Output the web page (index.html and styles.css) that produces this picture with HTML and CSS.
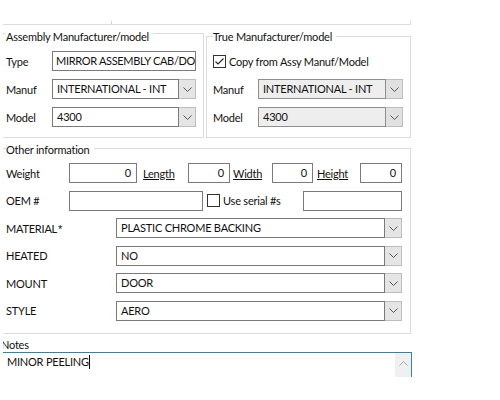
FILE: index.html
```html
<!DOCTYPE html>
<html lang="en">
<head>
  <meta charset="UTF-8">
  <meta name="viewport" content="width=device-width, initial-scale=1.0">
  <title>Assembly details</title>
  <link rel="stylesheet" href="styles.css">
</head>
<body>
  <div class="panel">
    <div class="topbar"><span class="tick"></span><span class="corner"></span></div>

    <div class="groups">
      <section class="group group-assy">
        <div class="group-title">Assembly Manufacturer/model</div>
        <div class="form-grid">
          <span>Type</span>
          <div class="field type-field">MIRROR ASSEMBLY CAB/DO</div>
          <span>Manuf</span>
          <div class="combo">
            <span class="combo-text">INTERNATIONAL - INT</span>
            <span class="combo-btn"><svg width="9" height="5" viewBox="0 0 9 5"><polyline points="0.5,0.5 4.5,4.5 8.5,0.5" fill="none" stroke="#555" stroke-width="1"/></svg></span>
          </div>
          <span>Model</span>
          <div class="combo">
            <span class="combo-text">4300</span>
            <span class="combo-btn"><svg width="9" height="5" viewBox="0 0 9 5"><polyline points="0.5,0.5 4.5,4.5 8.5,0.5" fill="none" stroke="#555" stroke-width="1"/></svg></span>
          </div>
        </div>
      </section>

      <section class="group group-true">
        <div class="group-title">True Manufacturer/model</div>
        <div class="form-grid">
          <div class="check-row">
            <span class="checkbox"><svg width="11" height="11" viewBox="0 0 11 11"><polyline points="1.5,5.5 4,8 9.5,2.5" fill="none" stroke="#222" stroke-width="1.1"/></svg></span>
            <span>Copy from Assy Manuf/Model</span>
          </div>
          <span>Manuf</span>
          <div class="combo disabled">
            <span class="combo-text">INTERNATIONAL - INT</span>
            <span class="combo-btn"><svg width="9" height="5" viewBox="0 0 9 5"><polyline points="0.5,0.5 4.5,4.5 8.5,0.5" fill="none" stroke="#555" stroke-width="1"/></svg></span>
          </div>
          <span>Model</span>
          <div class="combo disabled">
            <span class="combo-text">4300</span>
            <span class="combo-btn"><svg width="9" height="5" viewBox="0 0 9 5"><polyline points="0.5,0.5 4.5,4.5 8.5,0.5" fill="none" stroke="#555" stroke-width="1"/></svg></span>
          </div>
        </div>
      </section>
    </div>

    <section class="group group-other">
      <div class="group-title">Other information</div>
      <div class="other-rows">
        <div class="row">
          <span class="row-label">Weight</span>
          <div class="field num w-weight">0</div>
          <span class="dim-link l-length">Length</span>
          <div class="field num w-length">0</div>
          <span class="dim-link l-width">Width</span>
          <div class="field num w-width">0</div>
          <span class="dim-link l-height">Height</span>
          <div class="field num w-height">0</div>
        </div>
        <div class="row">
          <span class="row-label">OEM #</span>
          <div class="field w-oem"></div>
          <span class="checkbox serial-box"></span>
          <span class="serial-text">Use serial #s</span>
          <div class="field w-serial"></div>
        </div>
        <div class="row">
          <span class="row-label wide">MATERIAL<span class="star">*</span></span>
          <div class="combo grow">
            <span class="combo-text">PLASTIC CHROME BACKING</span>
            <span class="combo-btn"><svg width="9" height="5" viewBox="0 0 9 5"><polyline points="0.5,0.5 4.5,4.5 8.5,0.5" fill="none" stroke="#555" stroke-width="1"/></svg></span>
          </div>
        </div>
        <div class="row">
          <span class="row-label wide">HEATED</span>
          <div class="combo grow">
            <span class="combo-text">NO</span>
            <span class="combo-btn"><svg width="9" height="5" viewBox="0 0 9 5"><polyline points="0.5,0.5 4.5,4.5 8.5,0.5" fill="none" stroke="#555" stroke-width="1"/></svg></span>
          </div>
        </div>
        <div class="row">
          <span class="row-label wide">MOUNT</span>
          <div class="combo grow">
            <span class="combo-text">DOOR</span>
            <span class="combo-btn"><svg width="9" height="5" viewBox="0 0 9 5"><polyline points="0.5,0.5 4.5,4.5 8.5,0.5" fill="none" stroke="#555" stroke-width="1"/></svg></span>
          </div>
        </div>
        <div class="row">
          <span class="row-label wide">STYLE</span>
          <div class="combo grow">
            <span class="combo-text">AERO</span>
            <span class="combo-btn"><svg width="9" height="5" viewBox="0 0 9 5"><polyline points="0.5,0.5 4.5,4.5 8.5,0.5" fill="none" stroke="#555" stroke-width="1"/></svg></span>
          </div>
        </div>
      </div>
    </section>

    <div class="notes-label">Notes</div>
    <div class="notes-box">
      <div class="notes-text">MINOR PEELING<span class="caret"></span></div>
      <div class="scroll"><svg width="9" height="5" viewBox="0 0 9 5"><polyline points="0.5,4.5 4.5,0.5 8.5,4.5" fill="none" stroke="#a6a6a6" stroke-width="1"/></svg></div>
    </div>
  </div>
</body>
</html>
```

FILE: styles.css
```css
* {
  box-sizing: border-box;
}

body {
  margin: 0;
  background: #fff;
  color: #111;
  font-family: 'Lato', 'Liberation Sans', sans-serif;
  font-size: 11px;
  letter-spacing: -0.22px;
}

.panel {
  margin-left: 3px;
  width: 409px;
  height: 377px;
  overflow: hidden;
}

.topbar {
  height: 25px;
  margin-right: 1px;
  border-bottom: 1px solid #dcdcdc;
  display: flex;
  align-items: flex-end;
  justify-content: space-between;
}

.tick {
  width: 1px;
  height: 3px;
  margin-left: 108px;
  background: #d4d4d4;
}

.corner {
  width: 1px;
  height: 4px;
  background: #dcdcdc;
}

/* group boxes */
.groups {
  display: flex;
  align-items: flex-start;
}

.group {
  border: 1px solid #dcdcdc;
  border-left: none;
}

.group-assy {
  width: 201px;
  margin-top: 8px;
  padding: 0 7px 10px 3px;
}

.group-true {
  width: 205px;
  margin-top: 11px;
  margin-left: 2px;
  border-left: 1px solid #dcdcdc;
  padding: 0 7px 10px 6px;
}

.group-other {
  width: 408px;
  margin-top: 10px;
  padding: 0 8px 12px 3px;
}

.group-title {
  width: fit-content;
  background: #fff;
  padding-right: 4px;
  line-height: 14px;
}

.group-assy .group-title { margin-top: -4px; }
.group-true .group-title { margin-top: -7px; }
.group-other .group-title { margin-top: -6px; }

.form-grid {
  display: grid;
  grid-template-columns: 46px 1fr;
  align-items: center;
  row-gap: 8px;
  margin-top: 7px;
}

.group-true .form-grid {
  grid-template-columns: 45px 1fr;
}

.check-row {
  grid-column: 1 / -1;
  display: flex;
  align-items: center;
  height: 20px;
}

.checkbox {
  width: 13px;
  height: 13px;
  border: 1px solid #333;
  margin-right: 3px;
  display: flex;
  flex: none;
}

/* inputs */
.field {
  height: 20px;
  border: 1px solid #7a7a7a;
  padding: 0 4px;
  line-height: 18px;
  white-space: nowrap;
  overflow: hidden;
  flex: none;
}

.type-field {
  padding: 0 0 0 3px;
  letter-spacing: -0.32px;
}

.num {
  text-align: right;
  padding-right: 5px;
}

.combo {
  display: flex;
  height: 20px;
}

.combo-text {
  flex: 1;
  border: 1px solid #7a7a7a;
  padding-left: 4px;
  line-height: 18px;
  white-space: nowrap;
  overflow: hidden;
}

.combo-btn {
  width: 17px;
  border: 1px solid #bdbdbd;
  border-left: none;
  background: #e5e5e5;
  display: flex;
  align-items: center;
  justify-content: center;
}

.combo.disabled .combo-text {
  background: #eeeeee;
  border-color: #8e8e8e;
}

.combo.disabled .combo-btn {
  background: #e1e1e1;
}

/* other information */
.other-rows {
  display: flex;
  flex-direction: column;
  gap: 7.6px;
  margin-top: 6px;
}

.row {
  display: flex;
  align-items: center;
  height: 20px;
}

.row-label {
  width: 63px;
  flex: none;
}

.row-label.wide {
  width: 110px;
}

.star {
  font-family: 'Liberation Sans', sans-serif;
  margin-left: 1px;
}

.grow {
  flex: 1;
}

.dim-link {
  flex: none;
  text-decoration: underline;
}

.w-weight { width: 68px; }
.l-length { width: 51px; padding-left: 6px; }
.w-length { width: 42px; }
.l-width { width: 42px; padding-left: 3px; }
.w-width { width: 41px; }
.l-height { width: 47px; padding-left: 4px; }
.w-height { width: 42px; }

.w-oem { width: 134px; }

.serial-box {
  margin-left: 4px;
}

.serial-text {
  flex: 1;
}

.w-serial { width: 99px; }

/* notes */
.notes-label {
  margin-top: 4px;
  margin-left: -2px;
  line-height: 14px;
}

.notes-box {
  display: flex;
  height: 40px;
  border-top: 1px solid #2b87a8;
  border-right: 1px solid #2b87a8;
}

.notes-text {
  flex: 1;
  padding: 2px 0 0 4px;
  line-height: 14px;
}

.caret {
  display: inline-block;
  width: 1px;
  height: 14px;
  background: #000;
  vertical-align: top;
}

.scroll {
  width: 16px;
  background: #f0f0f0;
  display: flex;
  justify-content: center;
  padding-top: 8px;
}
```
